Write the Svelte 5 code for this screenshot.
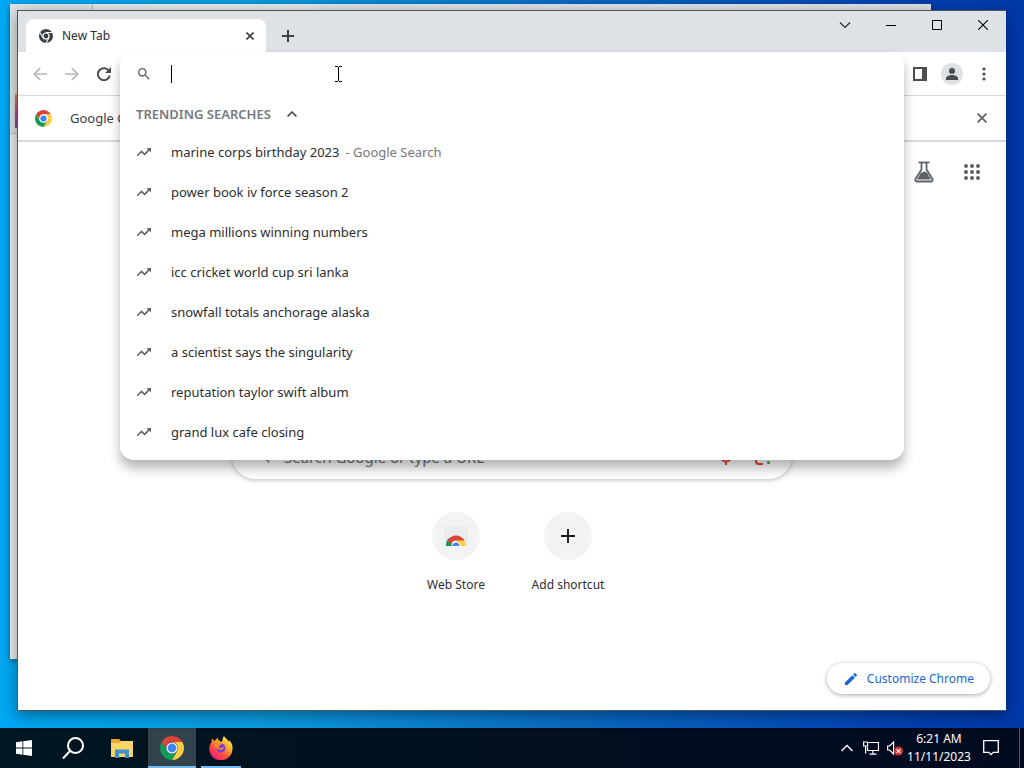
<script lang="ts">
	interface Suggestion {
		text: string;
		source?: string;
	}

	const suggestions: Suggestion[] = [
		{ text: 'marine corps birthday 2023', source: 'Google Search' },
		{ text: 'power book iv force season 2' },
		{ text: 'mega millions winning numbers' },
		{ text: 'icc cricket world cup sri lanka' },
		{ text: 'snowfall totals anchorage alaska' },
		{ text: 'a scientist says the singularity' },
		{ text: 'reputation taylor swift album' },
		{ text: 'grand lux cafe closing' }
	];

	let query = $state('');
	let expanded = $state(true);
</script>

{#snippet chromeLogo(size: number)}
	<svg width={size} height={size} viewBox="0 0 24 24" aria-hidden="true">
		<path d="M1.61 6A12 12 0 0 1 22.39 6H12A6 6 0 0 0 6.8 15Z" fill="#db4437" />
		<path d="M22.39 6A12 12 0 0 1 12 24L17.2 15A6 6 0 0 0 12 6Z" fill="#ffcd40" />
		<path d="M12 24A12 12 0 0 1 1.61 6L6.8 15A6 6 0 0 0 17.2 15Z" fill="#0f9d58" />
		<circle cx="12" cy="12" r="5.6" fill="#fff" />
		<circle cx="12" cy="12" r="4.4" fill="#4285f4" />
	</svg>
{/snippet}

{#snippet magnifier()}
	<svg width="16" height="16" viewBox="0 0 24 24" fill="#5f6368" aria-hidden="true">
		<path d="M15.5 14h-.79l-.28-.27A6.47 6.47 0 0 0 16 9.5 6.5 6.5 0 1 0 9.5 16c1.61 0 3.09-.59 4.23-1.57l.27.28v.79l5 4.99L20.49 19l-4.99-5zm-6 0C7.01 14 5 11.99 5 9.5S7.01 5 9.5 5 14 7.01 14 9.5 11.99 14 9.5 14z" />
	</svg>
{/snippet}

<div class="desktop">
	<div class="workspace">
		<!-- Window left open behind the browser -->
		<div class="back-window">
			<div class="back-tabs"><span class="back-tab"></span></div>
			<div class="back-accent"></div>
		</div>

		<main class="window">
			<header class="titlebar">
				<div class="tab">
					<svg width="14" height="14" viewBox="0 0 24 24" aria-hidden="true">
						<circle cx="12" cy="12" r="12" fill="#3c4043" />
						<path d="M12 6H23M17.2 15L12 24M6.8 15L1.6 6" stroke="#fff" stroke-width="1.8" />
						<circle cx="12" cy="12" r="5.2" fill="#3c4043" stroke="#fff" stroke-width="2" />
					</svg>
					<span class="tab-title">New Tab</span>
					<button class="icon-btn tab-close" type="button" aria-label="Close tab">
						<svg width="8" height="8" viewBox="0 0 8 8" stroke="#3c4043" stroke-width="1.6">
							<path d="M.5.5l7 7M7.500.5l-7 7" />
						</svg>
					</button>
				</div>
				<button class="icon-btn new-tab" type="button" aria-label="New tab">
					<svg width="12" height="12" viewBox="0 0 12 12" stroke="#3c4043" stroke-width="2">
						<path d="M6 0v12M0 6h12" />
					</svg>
				</button>
				<div class="caption">
					<button class="caption-btn" type="button" aria-label="Search tabs">
						<svg width="12" height="12" viewBox="0 0 12 12" fill="none" stroke="#222" stroke-width="1.1">
							<path d="M1 3.500l5 5 5-5" />
						</svg>
					</button>
					<button class="caption-btn" type="button" aria-label="Minimize">
						<svg width="10" height="10" viewBox="0 0 10 10" stroke="#000"><path d="M0 5.500h10" /></svg>
					</button>
					<button class="caption-btn" type="button" aria-label="Maximize">
						<svg width="10" height="10" viewBox="0 0 10 10" fill="none" stroke="#000">
							<path d="M.5.5h9v9h-9z" />
						</svg>
					</button>
					<button class="caption-btn" type="button" aria-label="Close">
						<svg width="10" height="10" viewBox="0 0 10 10" stroke="#000" stroke-width="1.1">
							<path d="M0 0l10 10M10 0L0 10" />
						</svg>
					</button>
				</div>
			</header>

			<div class="toolbar">
				<nav class="tools">
					<button class="icon-btn" type="button" aria-label="Back">
						<svg width="14" height="14" viewBox="0 0 14 14" fill="none" stroke="#b4b6b9" stroke-width="1.7">
							<path d="M14 7H1.500M7.200 1L1.200 7l6 6" />
						</svg>
					</button>
					<button class="icon-btn" type="button" aria-label="Forward">
						<svg width="14" height="14" viewBox="0 0 14 14" fill="none" stroke="#b4b6b9" stroke-width="1.7">
							<path d="M0 7h12.500M6.800 1l6 6-6 6" />
						</svg>
					</button>
					<button class="icon-btn" type="button" aria-label="Reload">
						<svg width="14" height="14" viewBox="0 0 14 14" fill="none" stroke="#4a4d51" stroke-width="2">
							<path d="M12.200 4.300A6 6 0 1 0 12.800 8.500" />
							<path d="M14 0v6H8z" fill="#4a4d51" stroke="none" />
						</svg>
					</button>
				</nav>

				<div class="omnibox">
					<div class="popup">
						<label class="search-row">
							{@render magnifier()}
							<span class="caret"></span>
							<input type="text" aria-label="Address and search bar" bind:value={query} />
						</label>
						<button class="trending" type="button" onclick={() => (expanded = !expanded)}>
							TRENDING SEARCHES
							<svg width="10" height="6" viewBox="0 0 10 6" fill="none" stroke="#4a4d51" stroke-width="1.6">
								<path d="M.6 5.400L5 1l4.400 4.400" />
							</svg>
						</button>
						{#if expanded}
							<ul class="suggestions">
								{#each suggestions as item}
									<li>
										<svg width="16" height="16" viewBox="0 0 16 16" fill="none" stroke="#5f6368" stroke-width="1.5">
											<path d="M1.200 11.700L5.500 7.400l3 3 5.300-5.300" />
											<path d="M10.500 4H15v4.500z" fill="#5f6368" stroke="none" />
										</svg>
										<span>{item.text}</span>
										{#if item.source}
											<span class="source">- {item.source}</span>
										{/if}
									</li>
								{/each}
							</ul>
						{/if}
					</div>
				</div>

				<div class="tools tools-end">
					<button class="icon-btn" type="button" aria-label="Side panel">
						<svg width="14" height="14" viewBox="0 0 14 14">
							<path d="M0 0h14v14H0zM2 2v10h7V2z" fill="#4a4d51" fill-rule="evenodd" />
						</svg>
					</button>
					<button class="icon-btn" type="button" aria-label="Profile">
						<svg width="22" height="22" viewBox="0 0 22 22">
							<circle cx="11" cy="11" r="11" fill="#dee1e6" />
							<circle cx="11" cy="8" r="3" fill="#4a4d51" />
							<path d="M5 17v-2c0-2 4-3 6-3s6 1 6 3v2z" fill="#4a4d51" />
						</svg>
					</button>
					<button class="icon-btn" type="button" aria-label="Menu">
						<svg width="4" height="14" viewBox="0 0 4 14" fill="#4a4d51">
							<circle cx="2" cy="2" r="1.6" />
							<circle cx="2" cy="7" r="1.6" />
							<circle cx="2" cy="12" r="1.6" />
						</svg>
					</button>
				</div>
			</div>

			<div class="infobar">
				{@render chromeLogo(17)}
				<span>Google C</span>
				<button class="icon-btn infobar-close" type="button" aria-label="Dismiss">
					<svg width="10" height="10" viewBox="0 0 10 10" stroke="#5f6368" stroke-width="1.8">
						<path d="M.6.6l8.800 8.800M9.400.6L.6 9.400" />
					</svg>
				</button>
			</div>

			<section class="page">
				<div class="page-top">
					<button class="icon-btn" type="button" aria-label="Search Labs">
						<svg width="20" height="22" viewBox="0 0 20 22" fill="none" stroke="#5f6368" stroke-width="1.8">
							<path d="M4.500 1.500h11" />
							<path d="M7.500 2v6.500L1.600 18c-.7 1.200 0 2.500 1.400 2.500h14c1.400 0 2.100-1.300 1.400-2.500L12.500 8.500V2" />
							<path d="M7 11.500h1.500l2-1.200 1.500 1.200h1L17 18.500H3z" fill="#5f6368" stroke="none" />
						</svg>
					</button>
					<button class="icon-btn" type="button" aria-label="Google apps">
						<svg width="16" height="16" viewBox="0 0 16 16" fill="#5f6368">
							{#each [2, 8, 14] as cy}
								{#each [2, 8, 14] as cx}
									<circle {cx} {cy} r="2" />
								{/each}
							{/each}
						</svg>
					</button>
				</div>

				<label class="realbox">
					{@render magnifier()}
					<input type="text" placeholder="Search Google or type a URL" aria-label="Search" />
					<svg width="16" height="18" viewBox="0 0 16 18" fill="none" aria-hidden="true">
						<rect x="5.500" y="0" width="5" height="10" rx="2.500" fill="#4285f4" />
						<path d="M2.500 8a5.500 5.500 0 0 0 11 0" stroke="#ea4335" stroke-width="2" />
						<path d="M8 13.500V17" stroke="#ea4335" stroke-width="2" />
					</svg>
					<svg width="18" height="18" viewBox="0 0 18 18" fill="none" stroke-width="2" aria-hidden="true">
						<path d="M2 7V5a3 3 0 0 1 3-3h3" stroke="#4285f4" />
						<path d="M16 7V5a3 3 0 0 0-3-3h-2" stroke="#fbbc04" />
						<path d="M2 10v3a3 3 0 0 0 3 3h4" stroke="#ea4335" />
						<circle cx="9" cy="9" r="3" fill="#4285f4" />
						<circle cx="14.500" cy="14.500" r="1.600" fill="#34a853" />
					</svg>
				</label>

				<div class="shortcuts">
					<a class="shortcut" href="#webstore">
						<span class="bubble">
							<svg width="24" height="24" viewBox="0 0 24 24" aria-hidden="true">
								<path d="M0 2h24v17a3 3 0 0 1-3 3H3a3 3 0 0 1-3-3z" fill="#eaecef" />
								<path d="M2 22a10 10 0 0 1 3-8l4 8z" fill="#0f9d58" />
								<path d="M22 22a10 10 0 0 0-3-7h-8l4 7z" fill="#ffcd40" />
								<path d="M3.400 16.500a10 10 0 0 1 17.200 0H12a5 5 0 0 0-4.800 3.500z" fill="#db4437" />
								<path d="M7.500 22a4.500 4.500 0 0 1 9 0z" fill="#fff" />
								<path d="M8.500 22a3.500 3.500 0 0 1 7 0z" fill="#4285f4" />
							</svg>
						</span>
						<span>Web Store</span>
					</a>
					<button class="shortcut" type="button">
						<span class="bubble">
							<svg width="14" height="14" viewBox="0 0 14 14" stroke="#202124" stroke-width="2">
								<path d="M7 0v14M0 7h14" />
							</svg>
						</span>
						<span>Add shortcut</span>
					</button>
				</div>

				<button class="customize" type="button">
					<svg width="16" height="16" viewBox="0 0 24 24" fill="#1967d2" aria-hidden="true">
						<path d="M3 17.250V21h3.750L17.810 9.940l-3.750-3.750L3 17.250zM20.710 7.040a1 1 0 0 0 0-1.410l-2.340-2.340a1 1 0 0 0-1.410 0l-1.830 1.830 3.750 3.750 1.830-1.830z" />
					</svg>
					Customize Chrome
				</button>
			</section>
		</main>
	</div>

	<footer class="taskbar">
		<button class="task pinned" type="button" aria-label="Start">
			<svg width="16" height="16" viewBox="0 0 16 16" fill="#fff">
				<path d="M0 2.200l6.500-.9v6.200H0zM7.300 1.200L16 0v7.500H7.300zM0 8.400h6.500v6.300L0 13.800zM7.300 8.400H16V16l-8.700-1.200z" />
			</svg>
		</button>
		<button class="task pinned" type="button" aria-label="Search">
			<svg width="22" height="22" viewBox="0 0 22 22" fill="none" stroke="#fff" stroke-width="2">
				<circle cx="13.500" cy="8.500" r="7.500" />
				<path d="M8 14l-7 7.500" />
			</svg>
		</button>
		<button class="task" type="button" aria-label="File Explorer">
			<svg width="22" height="19" viewBox="0 0 22 19">
				<path d="M0 0h8l2 2h12v16H0z" fill="#e5a83b" />
				<path d="M0 4h9l2-2h11v16H0z" fill="#fbd667" />
				<path d="M4 10.500h14V19h-4v-4.500H8V19H4z" fill="#3b93cf" />
			</svg>
		</button>
		<button class="task active" type="button" aria-label="Google Chrome">
			{@render chromeLogo(24)}
		</button>
		<button class="task running" type="button" aria-label="Firefox">
			<svg width="24" height="24" viewBox="0 0 24 24">
				<defs>
					<linearGradient id="fox" x1="20" y1="2" x2="5" y2="22" gradientUnits="userSpaceOnUse">
						<stop offset="0" stop-color="#fff04a" />
						<stop offset=".35" stop-color="#ffa52a" />
						<stop offset=".7" stop-color="#ff4a42" />
						<stop offset="1" stop-color="#e8237c" />
					</linearGradient>
				</defs>
				<path d="M15 0c1 2 4 3.500 5 6 .4-.4.3-1.300.2-2C23 7 23.800 10 23.500 13A11.600 11.600 0 1 1 2.500 6l.3-3.500c1 .5 1.700 1.300 2.200 2.200l1.500-.4C7 3 8 2.200 9 1.700c-.2 1 0 2 .8 2.800L13 6c.5-2 .6-4.300 2-6z" fill="url(#fox)" />
				<circle cx="12" cy="12" r="4.500" fill="#7b3fd0" />
				<path d="M4 7c2-1.600 4-1.200 5.500 0l3 .5c0 1.500-2.300 1.800-3 2.500 0 1.300.5 2 2 2 1 0 2-.8 3.500-.3-1 2-3.500 2.300-5.500 1.300C6.500 12 6 9.500 4 7z" fill="#ff8a2b" />
			</svg>
		</button>

		<div class="tray">
			<button class="tray-btn" type="button" aria-label="Show hidden icons">
				<svg width="12" height="8" viewBox="0 0 12 8" fill="none" stroke="#fff" stroke-width="1.3">
					<path d="M.5 7L6 1.500 11.500 7" />
				</svg>
			</button>
			<button class="tray-btn" type="button" aria-label="Network">
				<svg width="16" height="14" viewBox="0 0 16 14" fill="none" stroke="#fff" stroke-width="1.200">
					<path d="M5.500 1.500h10v8h-11V6M10 9.500v3.500M6.500 13.200h7" />
					<path d="M.6 1h4v4h-4zM2.600 5v7.500" />
				</svg>
			</button>
			<button class="tray-btn" type="button" aria-label="Volume muted">
				<svg width="16" height="15" viewBox="0 0 16 15" fill="none">
					<path d="M.6 5h2l4-4v12l-4-4h-2z" stroke="#fff" stroke-width="1.200" />
					<circle cx="11.500" cy="10" r="4.500" fill="#d0352e" />
					<path d="M9.600 8.100l3.800 3.800M13.400 8.100l-3.800 3.800" stroke="#fff" stroke-width="1.200" />
				</svg>
			</button>
			<button class="clock" type="button">
				<span>6:21 AM</span>
				<span>11/11/2023</span>
			</button>
			<button class="tray-btn notify" type="button" aria-label="Notifications">
				<svg width="16" height="16" viewBox="0 0 16 16" fill="none" stroke="#fff" stroke-width="1.300">
					<path d="M.7.7h14.600v11.600h-5L8 14.600l-2.300-2.300h-5z" />
				</svg>
			</button>
			<button class="show-desktop" type="button" aria-label="Show desktop"></button>
		</div>
	</footer>

	<svg class="cursor" width="7" height="16" viewBox="0 0 7 16" fill="none" stroke="#000" aria-hidden="true">
		<path d="M0 .5h3M4 .5h3M3.500 1v14M0 15.500h3M4 15.500h3" />
	</svg>
</div>

<style>
	:global(body) {
		margin: 0;
	}

	.desktop {
		position: relative;
		display: flex;
		flex-direction: column;
		height: 100vh;
		overflow: hidden;
		background: linear-gradient(90deg, #00a8f3 0%, #0a9ce0 25%, #0a6cc4 55%, #0444b4 85%, #0038a8 100%);
		color: #2c2d30;
		font-family: 'Segoe UI', 'Noto Sans', 'Open Sans', sans-serif;
		font-size: 13px;
		line-height: 20px;
	}

	button,
	input {
		padding: 0;
		border: none;
		background: none;
		color: inherit;
		font: inherit;
	}

	a {
		color: inherit;
		text-decoration: none;
	}

	svg {
		display: block;
		flex-shrink: 0;
	}

	.workspace {
		position: relative;
		flex: 1;
	}

	/* Windows */
	.back-window {
		position: absolute;
		inset: 4px 93px 69px 10px;
		background: #eceef0;
		box-shadow: 0 2px 6px rgba(0, 0, 0, 0.4);
	}

	.back-tabs {
		height: 130px;
		padding-left: 82px;
		border-bottom: 1px solid #c4c6c8;
		background: #dfe2e6;
		box-sizing: border-box;
	}

	.back-tab {
		display: block;
		width: 226px;
		height: 6px;
		border-left: 1px solid #b4b7ba;
		background: #e6e8ea;
	}

	.back-accent {
		position: absolute;
		top: 90px;
		left: 5px;
		width: 4px;
		height: 34px;
		background: linear-gradient(#e08a5c, #c04a8c, #7a4ab0);
	}

	.window {
		position: absolute;
		inset: 10px 18px 17px 17px;
		display: flex;
		flex-direction: column;
		border: 1px solid #4a565f;
		border-right: none;
		background: #fff;
		box-shadow: 0 4px 14px rgba(0, 0, 0, 0.4);
	}

	.titlebar {
		display: flex;
		align-items: flex-end;
		height: 41px;
		padding-left: 8px;
		background: #dee1e6;
	}

	.tab {
		display: flex;
		align-items: center;
		gap: 9px;
		width: 240px;
		height: 33px;
		padding: 0 10px 0 13px;
		border-radius: 8px 8px 0 0;
		background: #fff;
		box-sizing: border-box;
		font-size: 12px;
	}

	.tab-title {
		flex: 1;
	}

	.icon-btn {
		display: flex;
		align-items: center;
		justify-content: center;
		height: 24px;
	}

	.tab-close {
		width: 12px;
	}

	.new-tab {
		width: 28px;
		height: 33px;
		margin-left: 8px;
	}

	.caption {
		display: flex;
		align-self: flex-start;
		margin-left: auto;
	}

	.caption-btn {
		display: flex;
		align-items: center;
		justify-content: center;
		width: 46px;
		height: 28px;
	}

	.toolbar {
		display: flex;
		align-items: center;
		height: 43px;
		border-bottom: 1px solid #d8dadc;
	}

	.tools {
		display: flex;
		align-items: center;
		width: 102px;
		padding-left: 6px;
		box-sizing: border-box;
	}

	.tools .icon-btn {
		width: 32px;
	}

	.tools-end {
		padding-left: 0;
	}

	.omnibox {
		position: relative;
		flex: 1;
		align-self: stretch;
	}

	.popup {
		position: absolute;
		top: 0;
		left: 0;
		right: 0;
		z-index: 2;
		padding-bottom: 8px;
		border-radius: 14px;
		background: #fff;
		box-shadow: 0 8px 12px rgba(0, 0, 0, 0.3);
	}

	.search-row {
		display: flex;
		align-items: center;
		height: 44px;
		padding: 0 16px;
	}

	.caret {
		width: 1px;
		height: 18px;
		margin-left: 19px;
		background: #000;
	}

	.search-row input {
		flex: 1;
		outline: none;
	}

	.trending {
		display: flex;
		align-items: center;
		gap: 16px;
		width: 100%;
		height: 36px;
		padding: 0 16px;
		color: #74787c;
		font-weight: 600;
	}

	.suggestions {
		margin: 0;
		padding: 0;
		list-style: none;
	}

	.suggestions li {
		display: flex;
		align-items: center;
		height: 40px;
		padding: 0 16px;
	}

	.suggestions svg {
		margin-right: 19px;
	}

	.source {
		margin-left: 6px;
		color: #74787c;
	}

	.infobar {
		display: flex;
		align-items: center;
		gap: 18px;
		height: 46px;
		padding: 0 18px 0 17px;
		border-bottom: 2px solid #d6d8da;
		box-sizing: border-box;
		color: #3c4043;
	}

	.infobar-close {
		width: 12px;
		margin-left: auto;
	}

	/* New tab page */
	.page {
		display: flex;
		flex: 1;
		flex-direction: column;
		align-items: center;
	}

	.page-top {
		display: flex;
		align-self: flex-end;
		align-items: center;
		height: 60px;
		padding-right: 10px;
	}

	.page-top .icon-btn {
		width: 48px;
	}

	.realbox {
		display: flex;
		align-items: center;
		width: 560px;
		max-width: 100%;
		height: 46px;
		margin-top: 231px;
		padding: 2px 20px 0 24px;
		border-radius: 23px;
		background: #fff;
		box-shadow: 0 1px 5px rgba(32, 33, 36, 0.3);
		box-sizing: border-box;
	}

	.realbox input {
		flex: 1;
		margin-left: 12px;
		font-size: 15px;
		outline: none;
	}

	.realbox input::placeholder {
		color: #6b6f73;
		opacity: 1;
	}

	.realbox input + svg {
		margin-right: 20px;
	}

	.shortcuts {
		display: flex;
		margin-top: 33px;
	}

	.shortcut {
		display: flex;
		flex-direction: column;
		align-items: center;
		gap: 15px;
		width: 112px;
		font-size: 12px;
	}

	.bubble {
		display: flex;
		align-items: center;
		justify-content: center;
		width: 48px;
		height: 48px;
		border-radius: 50%;
		background: #f1f3f4;
	}

	.customize {
		display: flex;
		align-items: center;
		align-self: flex-end;
		gap: 8px;
		height: 31px;
		margin: auto 16px 16px;
		padding: 0 16px;
		border-radius: 16px;
		background: #fff;
		box-shadow: 0 1px 4px rgba(0, 0, 0, 0.35);
		color: #1967d2;
		font-size: 12px;
	}

	/* Taskbar */
	.taskbar {
		display: flex;
		gap: 2px;
		height: 40px;
		background: linear-gradient(90deg, #001620, #02101f 50%, #020a20);
		color: #fff;
	}

	.task {
		display: flex;
		align-items: center;
		justify-content: center;
		width: 48px;
		padding-top: 2px;
		border-bottom: 2px solid transparent;
		box-sizing: border-box;
	}

	.pinned {
		width: 47px;
	}

	.active {
		border-color: #76b9ed;
		background: #33434d;
	}

	.running {
		width: 40px;
		margin: 0 3px;
		border-color: #76b9ed;
	}

	.tray {
		display: flex;
		align-items: center;
		margin-left: auto;
	}

	.tray-btn {
		display: flex;
		align-items: center;
		justify-content: center;
		width: 24px;
		height: 40px;
	}

	.clock {
		display: flex;
		flex-direction: column;
		align-items: center;
		width: 64px;
		font-size: 12px;
		line-height: 18px;
	}

	.notify {
		width: 40px;
		margin-right: 8px;
	}

	.show-desktop {
		width: 5px;
		height: 40px;
		border-left: 1px solid #4a5568;
	}

	.cursor {
		position: absolute;
		top: 66px;
		left: 335px;
		z-index: 3;
	}
</style>
